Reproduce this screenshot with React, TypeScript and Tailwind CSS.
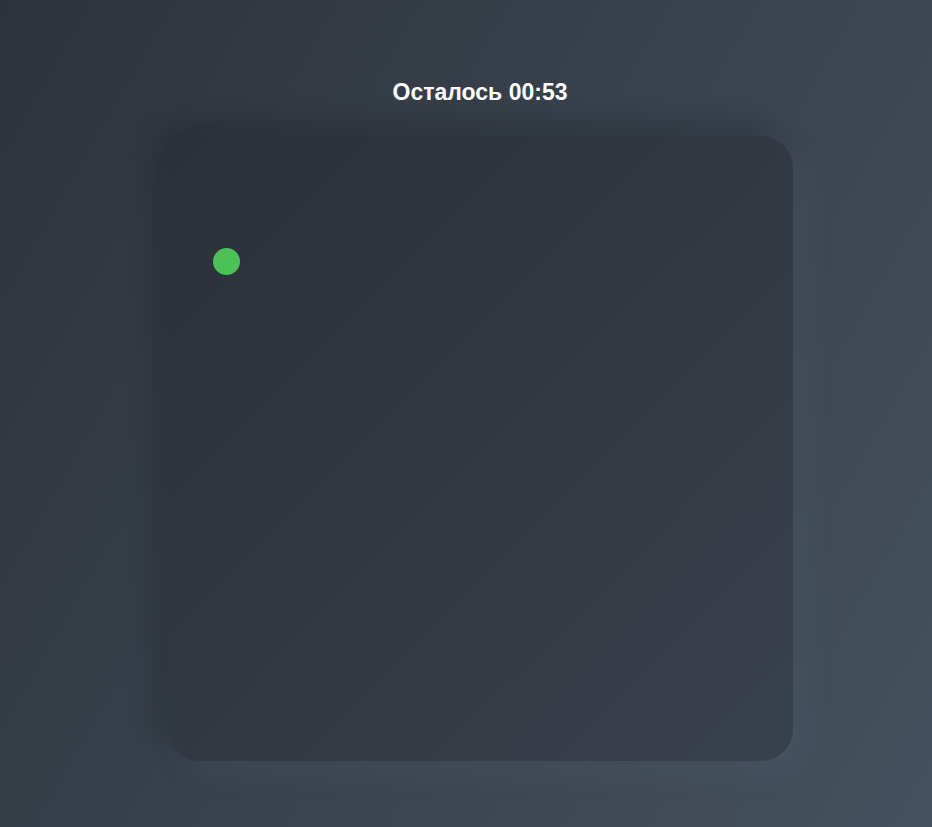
import React, { useState } from 'react';

// Игровое поле с таймером
const App: React.FC = () => {
  const [secondsLeft] = useState<number>(53);
  const [dot] = useState({ x: 59, y: 125 }); // позиция точки внутри поля

  const mm = String(Math.floor(secondsLeft / 60)).padStart(2, '0');
  const ss = String(secondsLeft % 60).padStart(2, '0');

  return (
    <div className="min-h-screen w-full overflow-hidden bg-[linear-gradient(120deg,#2d333c,#45515e)] font-['Liberation_Sans',Arial,sans-serif]">
      <div className="flex flex-col items-center pt-[78px] pl-[28px]">
        {/* таймер */}
        <h1 className="text-[23px] leading-[28px] font-bold text-white">
          Осталось {mm}:{ss}
        </h1>

        {/* поле */}
        <div className="relative mt-[30px] w-[625px] h-[625px] rounded-[32px] bg-gradient-to-br from-[#2b3039] to-[#39414c] shadow-[-12px_-12px_30px_rgba(0,0,0,0.18),12px_12px_30px_rgba(120,140,165,0.12)]">
          <div
            className="absolute w-[27px] h-[27px] rounded-full bg-[#4cc155]"
            style={{ left: dot.x - 13.5, top: dot.y - 13.5 }}
          />
        </div>
      </div>
    </div>
  );
};

export default App;
